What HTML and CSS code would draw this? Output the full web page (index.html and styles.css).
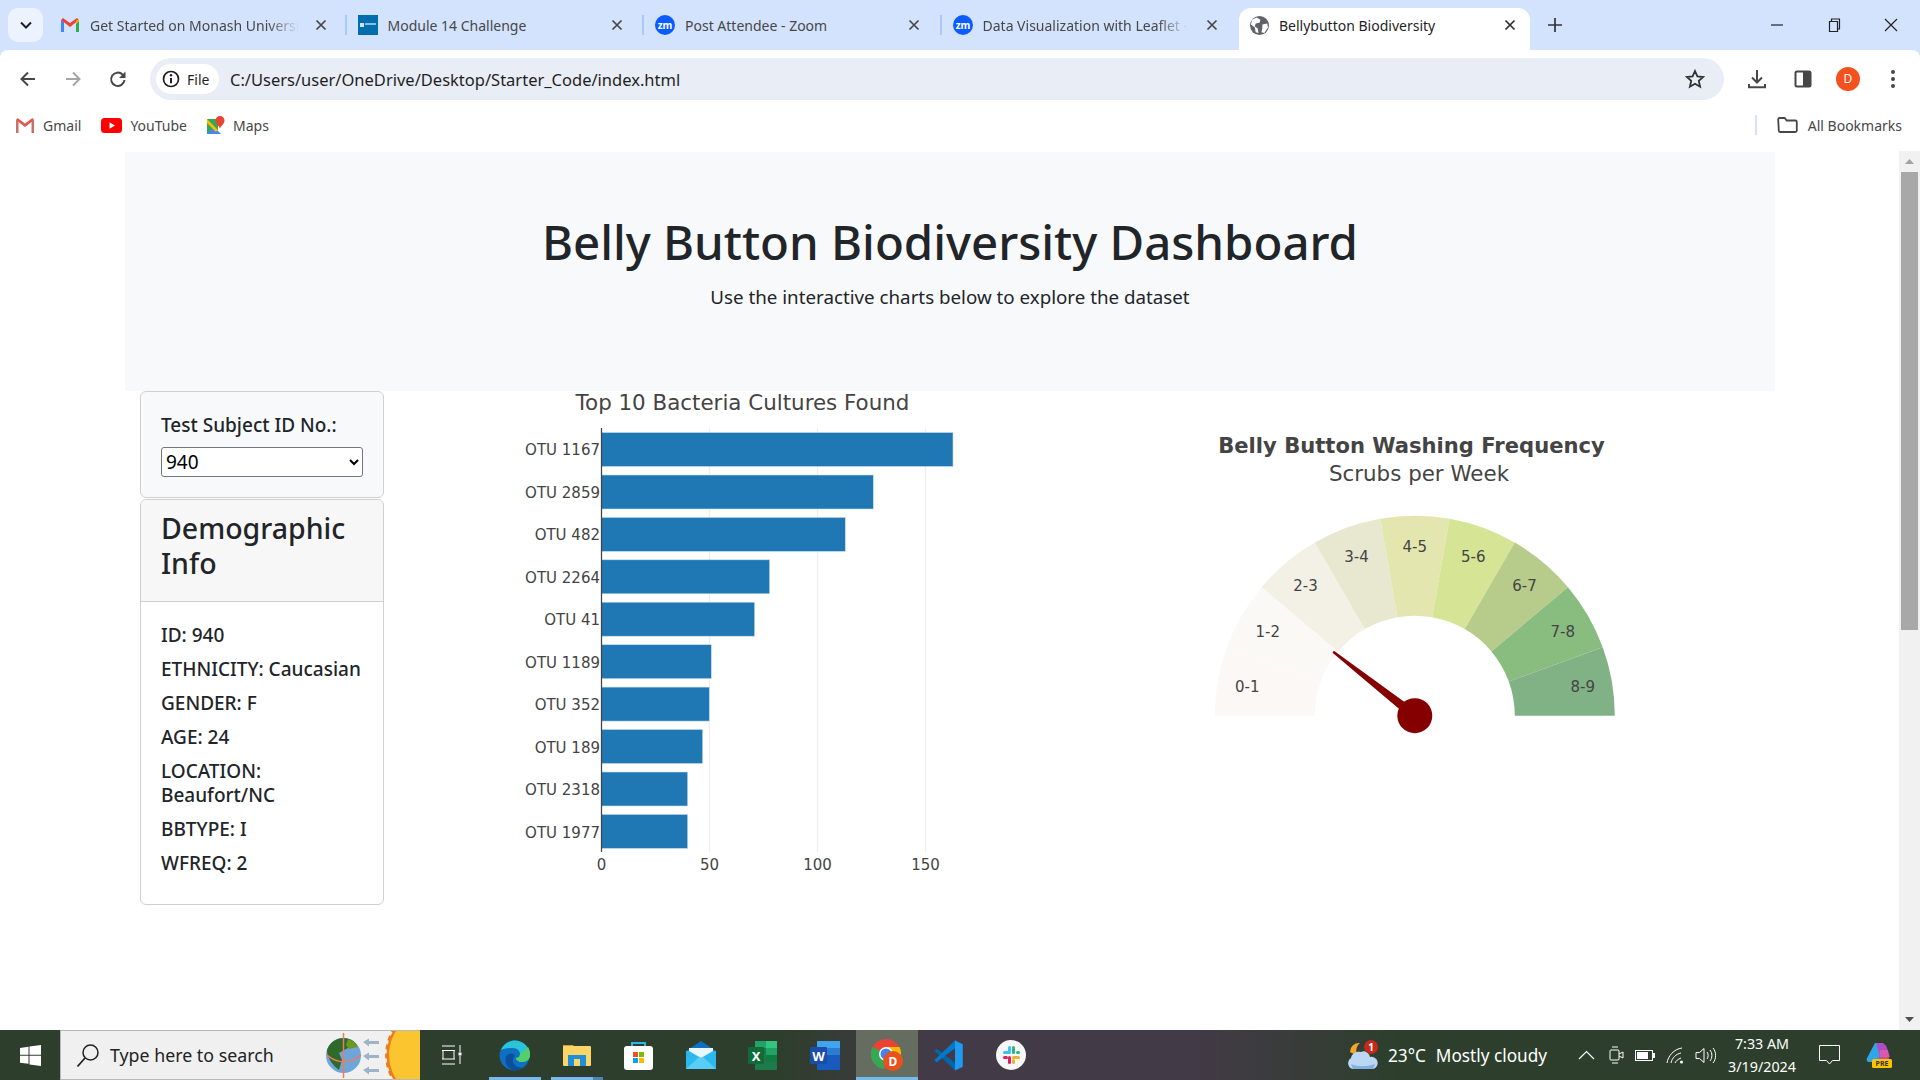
FILE: index.html
```html
<!DOCTYPE html>
<html lang="en">
<head>
  <meta charset="UTF-8">
  <title>Bellybutton Biodiversity</title>
  <link rel="stylesheet" href="styles.css">
</head>
<body>
  <div class="window">

    <!-- tab strip -->
    <div class="tabstrip">
      <div class="tab-search">
        <svg width="16" height="16" viewBox="0 0 16 16"><path d="M3 5.5l5 5 5-5" fill="none" stroke="#1f1f1f" stroke-width="2"/></svg>
      </div>
      <div class="tab">
        <svg class="favicon" width="20" height="16" viewBox="0 0 20 16"><path d="M1 15V3l3 1v11z" fill="#4285f4"/><path d="M16 15V4l3-1v12z" fill="#34a853"/><path d="M1 3l9 7 9-7-2-2-7 5-7-5z" fill="#ea4335"/><path d="M16 4l3-2v2l-3 3z" fill="#fbbc04"/></svg>
        <span class="tab-title fade">Get Started on Monash Universi</span>
        <svg class="tab-x" width="12" height="12" viewBox="0 0 12 12"><path d="M1.5 1.5l9 9m0-9l-9 9" stroke="#474747" stroke-width="1.7"/></svg>
      </div>
      <div class="tab">
        <svg class="favicon" width="20" height="20" viewBox="0 0 20 20"><rect width="20" height="20" fill="#006dae"/><rect x="2" y="8" width="4" height="4" fill="#cfe3f2"/><rect x="7" y="8" width="11" height="2" fill="#8fbddc"/></svg>
        <span class="tab-title">Module 14 Challenge</span>
        <svg class="tab-x" width="12" height="12" viewBox="0 0 12 12"><path d="M1.5 1.5l9 9m0-9l-9 9" stroke="#474747" stroke-width="1.7"/></svg>
      </div>
      <div class="tab">
        <svg class="favicon" width="20" height="20" viewBox="0 0 20 20"><circle cx="10" cy="10" r="10" fill="#0b5cff"/><text class="zm" x="10" y="13.5" text-anchor="middle">zm</text></svg>
        <span class="tab-title">Post Attendee - Zoom</span>
        <svg class="tab-x" width="12" height="12" viewBox="0 0 12 12"><path d="M1.5 1.5l9 9m0-9l-9 9" stroke="#474747" stroke-width="1.7"/></svg>
      </div>
      <div class="tab">
        <svg class="favicon" width="20" height="20" viewBox="0 0 20 20"><circle cx="10" cy="10" r="10" fill="#0b5cff"/><text class="zm" x="10" y="13.5" text-anchor="middle">zm</text></svg>
        <span class="tab-title fade">Data Visualization with Leaflet -</span>
        <svg class="tab-x" width="12" height="12" viewBox="0 0 12 12"><path d="M1.5 1.5l9 9m0-9l-9 9" stroke="#474747" stroke-width="1.7"/></svg>
      </div>
      <div class="tab active">
        <svg class="favicon" width="19" height="19" viewBox="0 0 20 20"><circle cx="10" cy="10" r="10" fill="#5f6368"/><path d="M7 1.5l4 2.5-1 3-4 1-1 3 3 2 1 5-3-1-1-5-4-3 1-5zM13 9l5-1 1 4-4 6-3-1 1-4z" fill="#fff"/></svg>
        <span class="tab-title">Bellybutton Biodiversity</span>
        <svg class="tab-x" width="12" height="12" viewBox="0 0 12 12"><path d="M1.5 1.5l9 9m0-9l-9 9" stroke="#303030" stroke-width="1.7"/></svg>
      </div>
      <svg class="tab-new" width="14" height="14" viewBox="0 0 14 14"><path d="M7 0v14M0 7h14" stroke="#333" stroke-width="1.7"/></svg>
      <div class="win-controls">
        <svg width="14" height="14" viewBox="0 0 14 14"><path d="M1 7h12" stroke="#222" stroke-width="1.2"/></svg>
        <svg width="14" height="14" viewBox="0 0 14 14"><path d="M2.5 3.5h8v10h-8zM4.5 3.5V1h8v10h-2" fill="none" stroke="#222" stroke-width="1.2"/></svg>
        <svg width="14" height="14" viewBox="0 0 14 14"><path d="M1 1l12 12m0-12L1 13" stroke="#222" stroke-width="1.2"/></svg>
      </div>
    </div>

    <!-- address bar -->
    <div class="toolbar">
      <div class="nav-buttons">
        <svg width="20" height="20" viewBox="0 0 20 20"><path d="M17 10H4m6-6.5L3.5 10l6.5 6.5" fill="none" stroke="#474747" stroke-width="2"/></svg>
        <svg width="20" height="20" viewBox="0 0 20 20"><path d="M3 10h13m-6-6.5l6.5 6.5-6.5 6.5" fill="none" stroke="#a6a6a6" stroke-width="2"/></svg>
        <svg width="20" height="20" viewBox="0 0 20 20"><path d="M16.5 11a6.7 6.7 0 1 1-2-5.5L16.5 8" fill="none" stroke="#474747" stroke-width="2"/><path d="M17.5 2.5V9H11z" fill="#474747"/></svg>
      </div>
      <div class="omnibox">
        <div class="chip">
          <svg width="18" height="18" viewBox="0 0 18 18"><circle cx="9" cy="9" r="7.5" fill="none" stroke="#1f1f1f" stroke-width="1.7"/><path d="M9 8v5.2" stroke="#1f1f1f" stroke-width="2"/><circle cx="9" cy="5.3" r="1.2" fill="#1f1f1f"/></svg>
          <span>File</span>
        </div>
        <span class="url">C:/Users/user/OneDrive/Desktop/Starter_Code/index.html</span>
        <svg class="star" width="20" height="20" viewBox="0 0 20 20"><path d="M10 2l2.4 5.4 5.8.6-4.4 3.9 1.3 5.8L10 14.7l-5.1 3 1.3-5.8L1.8 8l5.8-.6z" fill="none" stroke="#333" stroke-width="1.8"/></svg>
      </div>
      <div class="tool-buttons">
        <svg width="20" height="20" viewBox="0 0 20 20"><path d="M10 1v12M5 8.5l5 5 5-5M2 15v3.2h16V15" fill="none" stroke="#474747" stroke-width="2"/></svg>
        <svg width="20" height="20" viewBox="0 0 20 20"><rect x="2.5" y="2.5" width="15" height="15" rx="1.5" fill="none" stroke="#474747" stroke-width="2"/><rect x="10" y="2.5" width="7.5" height="15" fill="#474747"/></svg>
        <div class="avatar">D</div>
        <svg width="6" height="20" viewBox="0 0 6 20"><circle cx="3" cy="3" r="2" fill="#474747"/><circle cx="3" cy="10" r="2" fill="#474747"/><circle cx="3" cy="17" r="2" fill="#474747"/></svg>
      </div>
    </div>

    <!-- bookmarks -->
    <div class="bookmarks">
      <div class="bookmark">
        <svg width="20" height="15" viewBox="0 0 20 15"><path d="M1 15V2l2.5 1v12z" fill="#c5736a"/><path d="M16.5 15V3L19 2v13z" fill="#c5736a"/><path d="M1 2l9 7 9-7-1.5-2L10 5.5 2.5 0z" fill="#e2574c"/></svg>
        <span>Gmail</span>
      </div>
      <div class="bookmark">
        <svg width="21" height="15" viewBox="0 0 21 15"><rect width="21" height="15" rx="3.5" fill="#f00"/><path d="M8.5 4.2v6.600l5.500-3.300z" fill="#fff"/></svg>
        <span>YouTube</span>
      </div>
      <div class="bookmark">
        <svg width="18" height="18" viewBox="0 0 18 18"><path d="M0 3h11v15H0z" fill="#34a853"/><path d="M0 18l7-7 7 7z" fill="#4285f4"/><path d="M0 3l11 11-2 2L0 7z" fill="#fbbc04"/><path d="M13 0a4.5 4.5 0 0 1 4.5 4.5C17.5 7.5 14 10 13 12.5 12 10 8.5 7.5 8.5 4.5A4.5 4.5 0 0 1 13 0z" fill="#ea4335"/></svg>
        <span>Maps</span>
      </div>
      <div class="bookmarks-end">
        <svg width="21" height="16" viewBox="0 0 21 16"><path d="M1.200 2.500a1.500 1.500 0 0 1 1.500-1.500h5l2 2.500h8.600a1.500 1.500 0 0 1 1.500 1.500v8.500a1.500 1.500 0 0 1-1.500 1.500h-15a1.500 1.500 0 0 1-1.500-1.500z" fill="none" stroke="#474747" stroke-width="1.8"/></svg>
        <span>All Bookmarks</span>
      </div>
    </div>

    <!-- the page itself -->
    <div class="viewport">
      <div class="page">
        <div class="container">
          <div class="jumbotron">
            <h1>Belly Button Biodiversity Dashboard</h1>
            <p>Use the interactive charts below to explore the dataset</p>
          </div>
          <div class="row">
            <div class="col-side">
              <div class="well">
                <h5>Test Subject ID No.:</h5>
                <select class="subject-select">
                  <option>940</option>
                </select>
              </div>
              <div class="card">
                <div class="card-header">
                  <h3>Demographic Info</h3>
                </div>
                <div class="card-body">
                  <p>ID: 940</p>
                  <p>ETHNICITY: Caucasian</p>
                  <p>GENDER: F</p>
                  <p>AGE: 24</p>
                  <p>LOCATION: Beaufort/NC</p>
                  <p>BBTYPE: I</p>
                  <p>WFREQ: 2</p>
                </div>
              </div>
            </div>

            <div class="col-chart">
              <svg class="plot" width="687" height="500" viewBox="0 0 687 500">
                <text class="plot-title" x="342.5" y="19" text-anchor="middle">Top 10 Bacteria Cultures Found</text>
                <g class="grid">
                  <path d="M309.5 37V461M417.5 37V461M525.5 37V461"/>
                </g>
                <g class="bars">
                  <rect x="201.5" y="41.5" width="351.5" height="34"/>
                  <rect x="201.5" y="84" width="271.8" height="34"/>
                  <rect x="201.5" y="126.4" width="243.8" height="34"/>
                  <rect x="201.5" y="168.8" width="168.2" height="34"/>
                  <rect x="201.5" y="211.2" width="153.2" height="34"/>
                  <rect x="201.5" y="253.7" width="109.8" height="34"/>
                  <rect x="201.5" y="296.1" width="107.8" height="34"/>
                  <rect x="201.5" y="338.5" width="101.2" height="34"/>
                  <rect x="201.5" y="381" width="86.2" height="34"/>
                  <rect x="201.5" y="423.4" width="86.2" height="34"/>
                </g>
                <path class="zeroline" d="M201.5 37V461"/>
                <g class="tick" text-anchor="end">
                  <text x="200" y="64">OTU 1167</text>
                  <text x="200" y="106.5">OTU 2859</text>
                  <text x="200" y="149">OTU 482</text>
                  <text x="200" y="191.5">OTU 2264</text>
                  <text x="200" y="234">OTU 41</text>
                  <text x="200" y="276.5">OTU 1189</text>
                  <text x="200" y="319">OTU 352</text>
                  <text x="200" y="361.5">OTU 189</text>
                  <text x="200" y="404">OTU 2318</text>
                  <text x="200" y="446.5">OTU 1977</text>
                </g>
                <g class="tick" text-anchor="middle">
                  <text x="201.5" y="479">0</text>
                  <text x="309.5" y="479">50</text>
                  <text x="417.5" y="479">100</text>
                  <text x="525.5" y="479">150</text>
                </g>
              </svg>
            </div>

            <div class="col-chart">
              <svg class="plot" width="687" height="500" viewBox="0 0 687 500">
                <text class="plot-title strong" x="323.5" y="62" text-anchor="middle">Belly Button Washing Frequency</text>
                <text class="plot-title" x="331" y="90" text-anchor="middle">Scrubs per Week</text>
                <path d="M126.8 324.7A200 200 0 0 1 138.86 256.3L232.83 290.5A100 100 0 0 0 226.8 324.7Z" fill="#fbf8f5"/>
                <path d="M138.86 256.3A200 200 0 0 1 173.6 196.14L250.2 260.42A100 100 0 0 0 232.83 290.5Z" fill="#faf9f5"/>
                <path d="M173.6 196.14A200 200 0 0 1 226.8 151.5L276.8 238.1A100 100 0 0 0 250.2 260.42Z" fill="#f3f1e5"/>
                <path d="M226.8 151.5A200 200 0 0 1 292.07 127.74L309.43 226.22A100 100 0 0 0 276.8 238.1Z" fill="#e8e7cf"/>
                <path d="M292.07 127.74A200 200 0 0 1 361.53 127.74L344.17 226.22A100 100 0 0 0 309.43 226.22Z" fill="#e3e7af"/>
                <path d="M361.53 127.74A200 200 0 0 1 426.8 151.5L376.8 238.1A100 100 0 0 0 344.17 226.22Z" fill="#d5e495"/>
                <path d="M426.8 151.5A200 200 0 0 1 480 196.14L403.4 260.42A100 100 0 0 0 376.8 238.1Z" fill="#b7cb8b"/>
                <path d="M480 196.14A200 200 0 0 1 514.74 256.3L420.77 290.5A100 100 0 0 0 403.4 260.42Z" fill="#89bd80"/>
                <path d="M514.74 256.3A200 200 0 0 1 526.8 324.7L426.8 324.7A100 100 0 0 0 420.77 290.5Z" fill="#81b285"/>
                <g class="tick" text-anchor="middle">
                  <text x="159.2" y="301">0-1</text>
                  <text x="179.8" y="246">1-2</text>
                  <text x="217.5" y="200">2-3</text>
                  <text x="268.5" y="171">3-4</text>
                  <text x="326.8" y="161">4-5</text>
                  <text x="385.2" y="171">5-6</text>
                  <text x="436.5" y="200">6-7</text>
                  <text x="474.8" y="246">7-8</text>
                  <text x="494.8" y="301">8-9</text>
                </g>
                <path d="M245.9 259.8L244.5 261.7L323.7 328.6L329.9 320.8Z" fill="#850000"/>
                <circle cx="326.8" cy="324.7" r="17.5" fill="#850000"/>
              </svg>
            </div>
          </div>
        </div>
      </div>
      <div class="scrollbar">
        <svg class="scroll-arrow" width="17" height="17" viewBox="0 0 17 17"><path d="M4 11l4.500-5 4.500 5z" fill="#a3a3a3"/></svg>
        <div class="scroll-thumb"></div>
        <svg class="scroll-arrow bottom" width="17" height="17" viewBox="0 0 17 17"><path d="M4 6l4.500 5 4.500-5z" fill="#505050"/></svg>
      </div>
    </div>

    <!-- windows taskbar -->
    <div class="taskbar">
      <div class="start">
        <svg width="21" height="21" viewBox="0 0 21 21"><path d="M0 3l8.500-1.200v8H0zM9.500 1.600L21 0v9.800H9.500zM0 10.800h8.500v8L0 17.700zM9.500 10.800H21V21L9.500 19.400z" fill="#fff"/></svg>
      </div>
      <div class="search-box">
        <svg width="24" height="25" viewBox="0 0 24 25"><circle cx="14.5" cy="9.5" r="7.5" fill="none" stroke="#222" stroke-width="1.5"/><path d="M9 15L1.5 23.5" stroke="#222" stroke-width="1.8"/></svg>
        <span>Type here to search</span>
        <svg class="search-art" width="94" height="48" viewBox="0 0 94 48">
          <circle cx="17.5" cy="24.5" r="17.5" fill="#6ea6dc"/>
          <path d="M17.5 7A17.5 17.5 0 0 0 1 19c0 7 5 15 12 20l3-10-3-7 9-5 9-3a17.5 17.5 0 0 0-13.5-7z" fill="#2f6a2b"/>
          <path d="M22 8a17.5 17.5 0 0 1 10 8l-9 2-3-4z" fill="#6c9a1e"/>
          <path d="M1 24c10 9 24 9 34 0" fill="none" stroke="#f07a5a" stroke-width="1.5"/>
          <path d="M17.5 2v45" stroke="#f07a5a" stroke-width="1.5"/>
          <path d="M37 11l6-3.500V10h10v3H43v2.500zM37 25l6-3.500V24h10v3H43v2.500zM37 39l6-3.500V38h10v3H43v2.500z" fill="#9db3c8"/>
          <circle class="sun-rays" cx="107.6" cy="24" r="47"/>
          <circle cx="107.6" cy="24" r="44.6" fill="#fbc530"/>
        </svg>
      </div>
      <div class="task-item wide">
        <svg width="20" height="20" viewBox="0 0 20 20"><path d="M0 1h13M0 5.500h13M0 14h13M0 19h13M1 5.500v8.500M12 5.500v8.500M18 0v7M18 11v8" fill="none" stroke="#fff" stroke-width="1"/><rect x="16.5" y="7.5" width="3" height="3" fill="#fff"/></svg>
      </div>
      <div class="task-item open">
        <svg width="31" height="31" viewBox="0 0 31 31"><circle cx="15.5" cy="15.5" r="15" fill="#0f6fc0"/><path d="M2 10C5 3 11 .5 16 .5 24 .5 31 7 31 15c0 4-3 7-8 7-3 0-6-2-6-4 2 0 4-1 4-4 0-3-3-6-7-6C9 8 4 9 2 10z" fill="#2bc3d8"/><path d="M29 7c2 3 2 6 2 8 0 4-3 7-8 7-3 0-6-2-6-4 2 0 4-1 4-4l8-7z" fill="#55cf6a"/><path d="M14 30c-6-2-9-8-7-13 2-4 7-5 9-1-2 1-3 4-1 8 2 3 6 4 9 3-3 3-6 4-10 3z" fill="#0b4f9c"/></svg>
      </div>
      <div class="task-item open split">
        <svg width="28" height="24" viewBox="0 0 28 24"><path d="M0 2h10l2 2H0z" fill="#d79f20"/><rect y="3" width="28" height="20" rx="1" fill="#fbd667"/><path d="M5 12h18v11H5z" fill="#1f8fdb"/><path d="M11 16h6v7h-6z" fill="#fbd667"/></svg>
      </div>
      <div class="task-item">
        <svg width="29" height="29" viewBox="0 0 29 29"><path d="M8 6V2h13v4" fill="none" stroke="#31b6e8" stroke-width="2"/><rect y="5" width="29" height="24" rx="3" fill="#fff"/><rect x="9" y="11" width="5" height="5" fill="#f25022"/><rect x="15" y="11" width="5" height="5" fill="#7fba00"/><rect x="9" y="17" width="5" height="5" fill="#00a4ef"/><rect x="15" y="17" width="5" height="5" fill="#ffb900"/></svg>
      </div>
      <div class="task-item">
        <svg width="30" height="28" viewBox="0 0 30 28"><path d="M0 10L15 0l15 10v18H0z" fill="#0f6fc0"/><path d="M0 10h30v18H0z" fill="#2cb8ee"/><path d="M3 7h24v3L15 17 3 10z" fill="#e9f6fd"/><path d="M0 28l13-12 2 1 2-1 13 12z" fill="#58cdf5"/></svg>
      </div>
      <div class="task-item">
        <svg width="30" height="29" viewBox="0 0 30 29"><rect x="7" width="22" height="29" rx="1" fill="#1d7a4a"/><rect x="18" width="11" height="7" fill="#33c481"/><rect x="18" y="7" width="11" height="7" fill="#21a366"/><rect x="7" width="11" height="7" fill="#21a366"/><rect x="18" y="14" width="11" height="7" fill="#107c41"/><rect y="6" width="16" height="17" rx="1" fill="#0f6b38"/><text class="app-letter" x="8" y="19.5" text-anchor="middle">X</text></svg>
      </div>
      <div class="task-item">
        <svg width="30" height="29" viewBox="0 0 30 29"><rect x="7" width="23" height="29" rx="1" fill="#185abd"/><rect x="7" width="23" height="7" fill="#41a5ee"/><rect x="7" y="7" width="23" height="7" fill="#2b7cd3"/><rect y="6" width="17" height="17" rx="1" fill="#1a4ea8"/><text class="app-letter" x="8.5" y="19.5" text-anchor="middle">W</text></svg>
      </div>
      <div class="task-item open current">
        <svg width="32" height="32" viewBox="0 0 32 32"><circle cx="15" cy="15" r="15" fill="#ea4335"/><path d="M15 15L1.5 8A15 15 0 0 0 13 30z" fill="#34a853"/><path d="M15 8h13.5A15 15 0 0 1 19 29z" fill="#fbbc04"/><circle cx="15" cy="15" r="7" fill="#fff"/><circle cx="15" cy="15" r="5.5" fill="#4285f4"/><circle cx="22" cy="22" r="10" fill="#e8501e"/><text class="app-letter small" x="22" y="26.5" text-anchor="middle">D</text></svg>
      </div>
      <div class="task-item purple">
        <svg width="31" height="31" viewBox="0 0 100 100"><path d="M71 2l25 12v72L71 98z" fill="#1f9cf0"/><path d="M4 35l8-7 59 45v25z" fill="#0065a9"/><path d="M71 2v25L12 72l-8-7z" fill="#007acc"/></svg>
      </div>
      <div class="task-item purple">
        <svg width="30" height="30" viewBox="0 0 30 30"><circle cx="15" cy="15" r="15" fill="#f7f7f7"/><rect x="7" y="11" width="8" height="3" rx="1.5" fill="#36c5f0"/><rect x="12" y="6" width="3" height="6" rx="1.5" fill="#36c5f0"/><rect x="16" y="6" width="3" height="8" rx="1.5" fill="#2eb67d"/><rect x="20" y="11" width="4" height="3" rx="1.5" fill="#2eb67d"/><rect x="16" y="16" width="8" height="3" rx="1.5" fill="#ecb22e"/><rect x="16" y="19" width="3" height="5" rx="1.5" fill="#ecb22e"/><rect x="12" y="16" width="3" height="8" rx="1.5" fill="#e01e5a"/><rect x="7" y="16" width="5" height="3" rx="1.5" fill="#e01e5a"/></svg>
      </div>
      <div class="tray">
        <div class="weather">
          <svg width="32" height="30" viewBox="0 0 32 30"><path d="M12 3a9 9 0 0 0-10 9 9 9 0 0 0 7 2 9 9 0 0 1 3-11z" fill="#f4a62a"/><path d="M5 29a6 6 0 0 1-2-11c1-5 6-7 10-6 3-2 8 0 9 5a6 6 0 0 1 3 12z" fill="#bcd7f3"/><path d="M3 24c6 3 16 3 24 0l-2 5H5z" fill="#7fb0e0"/><circle cx="23" cy="7" r="7" fill="#c42b1c"/><text class="badge" x="23" y="11" text-anchor="middle">1</text></svg>
          <span>23°C</span>
          <span>Mostly cloudy</span>
        </div>
        <div class="tray-icons">
          <svg class="tray-chevron" width="17" height="10" viewBox="0 0 17 10"><path d="M1 9l7.500-7.500L16 9" fill="none" stroke="#fff" stroke-width="1.2"/></svg>
          <svg width="15" height="20" viewBox="0 0 15 20"><rect x="1" y="5" width="9" height="10" rx="1" fill="none" stroke="#fff"/><path d="M10 9l4-2v6l-4-2M3 2h6M3 18h6" fill="none" stroke="#fff"/></svg>
          <svg width="20" height="11" viewBox="0 0 20 11"><rect x=".5" y=".5" width="17" height="10" fill="none" stroke="#fff"/><rect x="2" y="2" width="11" height="7" fill="#fff"/><rect x="18" y="3" width="2" height="5" fill="#fff"/></svg>
          <svg width="18" height="17" viewBox="0 0 18 17"><path d="M1 16C2 9 8 2 16 1M5 16c1-5 5-9 10-10M9 16c1-2 3-4 6-5" fill="none" stroke="#fff"/><circle cx="15.5" cy="15" r="1.5" fill="#fff"/></svg>
          <svg width="21" height="17" viewBox="0 0 21 17"><path d="M1 5.500h3.500L9 1.500v14l-4.500-4H1zM12 5c1.500 2 1.500 5 0 7M15 3c2.500 3 2.500 8 0 11M18 1c3.500 4 3.500 11 0 15" fill="none" stroke="#fff"/></svg>
        </div>
        <div class="clock">
          <div>7:33 AM</div>
          <div>3/19/2024</div>
        </div>
        <svg class="notify" width="21" height="20" viewBox="0 0 21 20"><path d="M.5.500h20v15h-7l-3 3.500-3-3.500h-7z" fill="none" stroke="#fff"/></svg>
        <svg class="copilot" width="26" height="26" viewBox="0 0 26 26"><path d="M9 1h8L12 20H3c-2 0-3-2-2-4z" fill="#2fa6e8"/><path d="M10 1h5c3 0 5 2 6 5l3 9H14z" fill="#b04cc8"/><path d="M14 8h8l1 9H13z" fill="#e85aa8" opacity=".8"/><rect x="6" y="17" width="20" height="9" rx="1.5" fill="#fdc300"/><text class="pre" x="16" y="24.2" text-anchor="middle">PRE</text></svg>
      </div>
    </div>
  </div>
</body>
</html>
```

FILE: styles.css
```css
* {
  box-sizing: border-box;
}
body {
  margin: 0;
  font-family: "Noto Sans", sans-serif;
  color: #212529;
  background: #fff;
}
.window {
  display: flex;
  flex-direction: column;
  width: 1920px;
  height: 1080px;
  overflow: hidden;
  background: #d3e3fd;
}

/* tabs */
.tabstrip {
  display: flex;
  align-items: flex-end;
  height: 50px;
  padding-left: 8px;
  flex: none;
}
.tab-search {
  display: flex;
  align-items: center;
  justify-content: center;
  width: 35px;
  height: 34px;
  margin: 0 6px 8px 0;
  border-radius: 10px;
  background: #edf3fe;
}
.tab {
  display: flex;
  align-items: center;
  width: 297.5px;
  height: 42px;
  padding: 0 21.5px 8px 11px;
  position: relative;
  font-size: 14px;
  color: #474747;
}
.tab::after {
  content: "";
  position: absolute;
  right: 0;
  top: 7px;
  height: 20px;
  width: 2px;
  background: #a8c7fa;
}
.tab:nth-child(5)::after,
.tab.active::after {
  display: none;
}
.tab.active {
  width: 291px;
  padding-right: 14.5px;
  background: #fff;
  border-radius: 12px 12px 0 0;
  color: #1f1f1f;
}
.favicon {
  flex: none;
  margin-right: 10px;
}
.tab-title {
  flex: 1;
  white-space: nowrap;
}
.tab-title.fade {
  -webkit-mask-image: linear-gradient(to right, #000 85%, transparent 100%);
  mask-image: linear-gradient(to right, #000 85%, transparent 100%);
  flex: none;
  margin-right: auto;
}
.tab-x {
  flex: none;
  margin-left: 16px;
}
.tab-new {
  flex: none;
  margin: 0 0 18px 18px;
}
.zm {
  font: bold 10px "Noto Sans", sans-serif;
  fill: #fff;
}
.win-controls {
  display: flex;
  align-items: center;
  gap: 43px;
  margin: 0 22px 18px auto;
}

/* toolbar */
.toolbar {
  display: flex;
  align-items: flex-start;
  height: 50px;
  padding-top: 8px;
  background: #fff;
  border-radius: 8px 8px 0 0;
  flex: none;
}
.nav-buttons {
  display: flex;
  gap: 25px;
  width: 150px;
  height: 42px;
  padding-left: 18px;
  align-items: center;
}
.omnibox {
  display: flex;
  align-items: center;
  width: 1574px;
  height: 42px;
  padding: 0 19px 0 6px;
  border-radius: 21px;
  background: #e9edf6;
}
.chip {
  display: flex;
  align-items: center;
  gap: 7px;
  width: 63px;
  height: 30px;
  padding-left: 6px;
  border-radius: 15px;
  background: #fff;
  font-size: 14px;
  color: #1f1f1f;
}
.url {
  margin-left: 11px;
  font-size: 16.5px;
  color: #1f1f1f;
}
.star {
  margin-left: auto;
}
.tool-buttons {
  display: flex;
  align-items: center;
  height: 42px;
  padding-left: 23px;
  gap: 26px;
}
.avatar {
  width: 24px;
  height: 24px;
  margin: 0 3.5px 0 -3px;
  border-radius: 50%;
  background: #f4511e;
  color: #fff;
  font-size: 12px;
  line-height: 24px;
  text-align: center;
}

/* bookmarks */
.bookmarks {
  display: flex;
  align-items: center;
  gap: 20px;
  height: 50px;
  padding: 0 18px 0 15px;
  background: #fff;
  font-size: 14px;
  color: #474747;
  flex: none;
}
.bookmark {
  display: flex;
  align-items: center;
  gap: 8px;
}
.bookmarks-end {
  display: flex;
  align-items: center;
  gap: 10px;
  margin-left: auto;
  height: 20px;
  padding-left: 20px;
  border-left: 2px solid #d3e3fd;
}

/* page */
.viewport {
  display: flex;
  flex: 1;
  min-height: 0;
  background: #fff;
}
.page {
  flex: 1;
  padding-top: 2px;
}
.container {
  width: 1650px;
  margin-left: 125px;
}
.jumbotron {
  height: 239px;
  padding-top: 60px;
  background: #f8f9fa;
  text-align: center;
}
.jumbotron h1 {
  margin: 0;
  font-size: 47.4px;
  font-weight: 500;
  line-height: 60px;
}
.jumbotron p {
  margin: 10px 0 0;
  font-size: 18.75px;
  line-height: 30px;
}
.row {
  display: grid;
  grid-template-columns: 275px 687.5px 687.5px;
}
.col-side {
  padding: 0 16px 0 15px;
}
.col-chart {
  min-width: 0;
}
.plot {
  display: block;
}
.well {
  height: 107px;
  padding: 20px;
  border: 1px solid #d0d0d0;
  border-radius: 6px;
  background: #f8f9fa;
}
.well h5 {
  margin: 0 0 7.5px;
  font-size: 19px;
  font-weight: 500;
  line-height: 27px;
}
.subject-select {
  display: block;
  width: 202px;
  height: 30px;
  padding: 0;
  font-family: "Noto Sans", sans-serif;
  font-size: 19px;
  color: #000;
  background: #fff;
  border: 1px solid #767676;
  border-radius: 3px;
}
.card {
  margin-top: 1px;
  border: 1px solid #d0d0d0;
  border-radius: 6px;
}
.card-header {
  height: 102px;
  padding: 10.5px 20px 0;
  background: #f7f7f7;
  border-bottom: 1px solid #d0d0d0;
  border-radius: 6px 6px 0 0;
}
.card-header h3 {
  margin: 0;
  font-size: 28.5px;
  font-weight: 500;
  line-height: 35.5px;
}
.card-body {
  padding: 21px 20px 19px;
}
.card-body p {
  margin: 0 0 10px;
  font-size: 19px;
  font-weight: 500;
  line-height: 24px;
}

/* plotly text */
.plot-title {
  font: 21.4px "DejaVu Sans", Verdana, sans-serif;
  fill: #444;
}
.plot-title.strong {
  font-size: 21.1px;
  font-weight: bold;
}
.tick text {
  font: 15px "DejaVu Sans", Verdana, sans-serif;
  fill: #444;
}
.grid path {
  stroke: #eee;
  stroke-width: 1.25;
  fill: none;
}
.bars rect {
  fill: #1f77b4;
  stroke: #c9dcec;
  stroke-width: .6;
}
.zeroline {
  stroke: #444;
  stroke-width: 1.25;
  fill: none;
}

/* scrollbar */
.scrollbar {
  display: flex;
  flex-direction: column;
  flex: none;
  width: 21px;
  padding: 2px 2px;
  margin-top: 1px;
  background: #f1f1f1;
}
.scroll-arrow {
  flex: none;
}
.scroll-thumb {
  height: 458px;
  margin-top: 2px;
  background: #a8a8a8;
}
.scroll-arrow.bottom {
  margin-top: auto;
}

/* taskbar */
.taskbar {
  display: flex;
  align-items: stretch;
  height: 50px;
  flex: none;
  background: linear-gradient(to right, #2e3e2c 0, #2e3e2c 780px, #433a47 930px, #433a47 1190px, #2d3f2c 1400px, #2d3f2c 100%);
}
.start {
  display: flex;
  align-items: center;
  justify-content: center;
  width: 60px;
}
.search-box {
  display: flex;
  align-items: center;
  width: 360px;
  padding-left: 15px;
  position: relative;
  overflow: hidden;
  background: #f0f0f0;
  border: 1px solid #b8b8b8;
  border-right: 0;
  font-size: 17.8px;
  color: #222;
}
.search-box span {
  margin-left: 10px;
}
.search-art {
  position: absolute;
  right: 0;
  top: 0;
}
.sun-rays {
  fill: #ed7d1c;
  stroke: #ed7d1c;
  stroke-width: 3;
  stroke-dasharray: 5 4;
}
.task-item {
  display: flex;
  align-items: center;
  justify-content: center;
  width: 62px;
  flex: none;
  position: relative;
}
.task-item.wide {
  width: 63.5px;
}
.task-item.open::after {
  content: "";
  position: absolute;
  left: 5px;
  right: 5px;
  bottom: 0;
  height: 3px;
  background: #76b9ed;
}
.task-item.split::after {
  background: linear-gradient(to right, #76b9ed 80%, #4d86b5 80%);
}
.task-item.current {
  background: #656d61;
}
.task-item.current::after {
  left: 0;
  right: 0;
}
.app-letter {
  font: bold 13px "Noto Sans", sans-serif;
  fill: #fff;
}
.app-letter.small {
  font-size: 12px;
}
.tray {
  display: flex;
  align-items: center;
  margin-left: auto;
  padding-right: 28px;
  color: #fff;
}
.weather {
  display: flex;
  align-items: center;
  gap: 10px;
  font-size: 17.2px;
}
.weather svg {
  margin-right: -2px;
}
.badge {
  font: bold 10px "Noto Sans", sans-serif;
  fill: #fff;
}
.tray-icons {
  display: flex;
  align-items: center;
  gap: 11px;
  margin-left: 31px;
}
.tray-chevron {
  margin-right: 3px;
}
.clock {
  margin-left: 12px;
  width: 68px;
  font-size: 14.3px;
  line-height: 23px;
  text-align: center;
}
.notify {
  margin-left: 23px;
}
.copilot {
  margin-left: 26px;
}
.pre {
  font: bold 7px "Noto Sans", sans-serif;
  fill: #333;
}
```
